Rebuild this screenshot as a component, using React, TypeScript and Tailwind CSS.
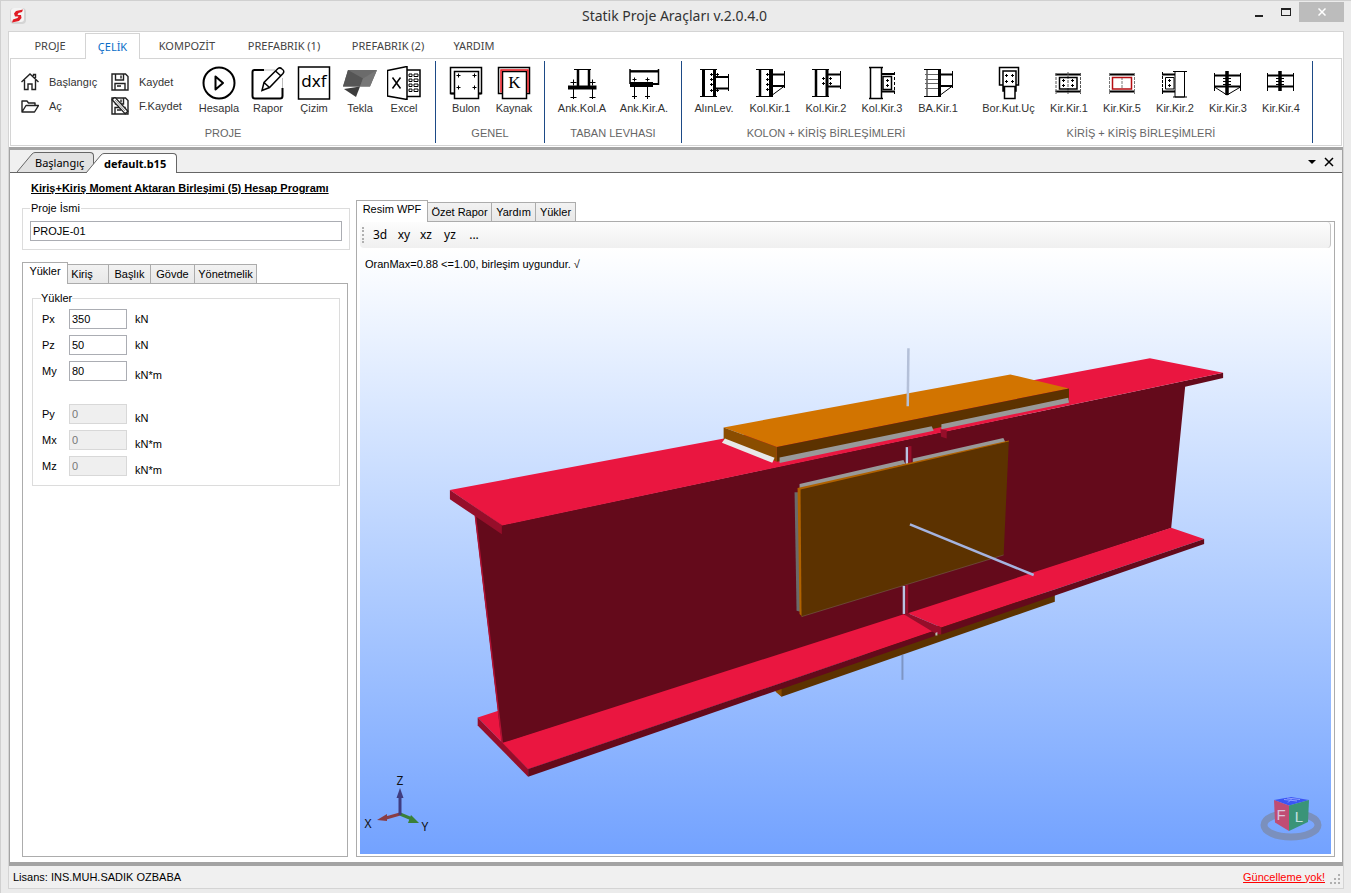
import { useState } from 'react';
import type { ReactNode } from 'react';
import clsx from 'clsx';

const menuTabs = [
  { name: 'PROJE', width: 'w-[70px]' },
  { name: 'ÇELİK', width: 'w-[55px]' },
  { name: 'KOMPOZİT', width: 'w-[94px]' },
  { name: 'PREFABRIK (1)', width: 'w-[100px]' },
  { name: 'PREFABRIK (2)', width: 'w-[108px]' },
  { name: 'YARDIM', width: 'w-[64px]' },
];

const loads = [
  { name: 'Px', value: '350', unit: 'kN', disabled: false },
  { name: 'Pz', value: '50', unit: 'kN', disabled: false },
  { name: 'My', value: '80', unit: 'kN*m', disabled: false },
];

const passiveLoads = [
  { name: 'Py', value: '0', unit: 'kN', disabled: true },
  { name: 'Mx', value: '0', unit: 'kN*m', disabled: true },
  { name: 'Mz', value: '0', unit: 'kN*m', disabled: true },
];

const Icon = ({ children }: { children: ReactNode }) => (
  <svg viewBox="0 0 34 34" className="h-[34px] w-[34px] shrink-0" fill="none" stroke="#000" strokeWidth="1" aria-hidden="true">
    {children}
  </svg>
);

// small bolt marks, drawn as crosses
const Bolts = ({ points, r = 2 }: { points: number[][]; r?: number }) => (
  <path d={points.map(([x, y]) => `M${x - r} ${y}h${r * 2}M${x} ${y - r}v${r * 2}`).join('')} />
);

const PlayIcon = () => (
  <Icon>
    <circle cx="17" cy="17" r="15.5" strokeWidth="2" />
    <path d="M13.5 10.5v13l7.5-6.500z" strokeWidth="2" strokeLinejoin="round" />
  </Icon>
);

const ReportIcon = () => (
  <Icon>
    <path d="M13 4H3.500Q1.500 4 1.500 6V30Q1.500 32.500 4 32.500H29Q31.500 32.500 31.500 30V22" strokeWidth="2" />
    <path d="M13 4H24M31.500 12V22" stroke="#bbb" />
    <path d="M11 24.500L13 16.500L27 2.500Q29 1 31 3Q34 5 32 7.500L18.500 21.500ZM13 16.500L18.500 21.500M24.500 5L30 10" strokeWidth="1.500" />
  </Icon>
);

const DxfIcon = () => (
  <Icon>
    <rect x="1.500" y="1" width="31" height="32" strokeWidth="1.500" />
    <text x="17" y="21" textAnchor="middle" fontSize="17" fontFamily="Noto Sans, sans-serif" fill="#000" stroke="none">dxf</text>
  </Icon>
);

const TeklaIcon = () => (
  <Icon>
    <g stroke="none">
      <path d="M5 4H34L27 20.500H0Z" fill="#6b6b6b" />
      <path d="M5 4L20 12.500L17 20.500H0Z" fill="#555" />
      <path d="M20 12.500L34 4L27 20.500H17Z" fill="#777" />
      <path d="M1 23L17 20.500L13 31Z" fill="#3c3c3c" />
    </g>
  </Icon>
);

const ExcelIcon = () => (
  <Icon>
    <path d="M0.500 4.500L20 0.500V33.500L0.500 30ZM20 4H33V30.500H20M5.500 11.500L13.500 22.500M13.500 11.500L5.500 22.500" strokeWidth="1.500" />
    <path d="M22 8H25V10.500H22ZM27 8H31V10.500H27ZM22 13H25V15.500H22ZM27 13H31V15.500H27ZM22 18H25V20.500H22ZM27 18H31V20.500H27ZM22 23H25V25.500H22ZM27 23H31V25.500H27Z" />
  </Icon>
);

const BoltPlateIcon = () => (
  <Icon>
    <path d="M5 27.500H1.500V1.500H32.500V27.500H29.500M5.500 5.500H29.500V32.500H5.500Z" strokeWidth="1.500" />
    <path d="M1.500 27.500H5.500M29.500 27.500H32.500" strokeWidth="2" />
    <Bolts points={[[9.5, 9.5], [25.5, 9.5], [9.5, 21.5], [25.5, 21.5]]} />
  </Icon>
);

const WeldPlateIcon = () => (
  <Icon>
    <path d="M5 27.500H1.500V1.500H32.500V27.500H29.500M5.500 5.500H29.500V32.500H5.500Z" strokeWidth="1.500" />
    <path d="M4 26.500V4H31V26.500" stroke="#e8141c" strokeWidth="1.500" />
    <text x="17.500" y="22" textAnchor="middle" fontSize="17" fontFamily="Liberation Serif, serif" fill="#000" stroke="none">K</text>
  </Icon>
);

const ColumnBaseIcon = () => (
  <Icon>
    <path d="M9 3.500H26M8.500 21V33M27.500 21V33M5.500 31.500H11.500M24.500 31.500H30.500" />
    <path d="M13 3.500V20M24 3.500V20" strokeWidth="2.500" />
    <path d="M3 21.500H31.500" strokeWidth="4" />
    <Bolts points={[[8.5, 16.5], [27.5, 16.5]]} r={3} />
  </Icon>
);

const BeamBaseIcon = () => (
  <Icon>
    <path d="M3 5H31.500M3 3V18M31.500 3V19" strokeWidth="1.500" />
    <path d="M3 5.500H31.500M25 18H31.500" strokeWidth="2" />
    <path d="M3 18.500H26" strokeWidth="5" />
    <path d="M7.500 21V33M20.500 21V33M5 30.500H10M18 30.500H23" />
    <Bolts points={[[7.5, 13.5], [20.5, 13.5]]} />
  </Icon>
);

const EndPlateIcon = () => (
  <Icon>
    <path d="M3 3.500H20M3 30.500H20M31.500 8V25" />
    <path d="M6.500 3.500V30.500" strokeWidth="3" />
    <path d="M17.500 3.500V30.500" strokeWidth="3" />
    <path d="M18 11H31.500M18 22.500H31.500" strokeWidth="2" />
    <Bolts r={1.5} points={[[14.5, 8.5], [14.5, 13.5], [14.5, 18.5], [14.5, 24.5], [20.5, 8.5], [20.5, 24.5]]} />
  </Icon>
);

const HaunchIcon = () => (
  <Icon>
    <path d="M3 3.500H20M3 30.500H20M31.500 5V22M20 28.500L31.500 20" />
    <path d="M7 3.500V30.500" strokeWidth="2.500" />
    <path d="M18 3.500V30.500" strokeWidth="4" />
    <path d="M18 8.500H31.500M18 20H31.500" strokeWidth="2" />
    <Bolts r={1.5} points={[[14.5, 8.5], [14.5, 13.5], [14.5, 18.5], [14.5, 23.5]]} />
  </Icon>
);

const FlushPlateIcon = () => (
  <Icon>
    <path d="M3 3.500H20M3 30.500H20M31.500 5V23" />
    <path d="M7 3.500V30.500" strokeWidth="2.500" />
    <path d="M18 3.500V30.500" strokeWidth="3" />
    <path d="M18 8.500H31.500M18 20.500H31.500" strokeWidth="2" />
    <Bolts r={1.5} points={[[14.5, 12.5], [14.5, 17.5], [21.5, 12.5], [21.5, 17.5]]} />
  </Icon>
);

const ShearPlateIcon = () => (
  <Icon>
    <path d="M5.500 1.500H16.500V32.500H5.500ZM4 1.500H18M4 32.500H18" strokeWidth="1.500" />
    <path d="M18 10.500H26.500V23.500H18Z" strokeWidth="1.500" />
    <path d="M17 8H30M17 25.500H30" strokeWidth="2" />
    <path d="M29.500 6V28" strokeDasharray="3 2" />
    <Bolts r={1.5} points={[[22.5, 14.5], [22.5, 19.5]]} />
  </Icon>
);

const ConcreteIcon = () => (
  <Icon>
    <path d="M3 3.500H20M3 30.500H20M6 3.500V30.500M31.500 5V22M20 28.500L31.500 20" />
    <path d="M4 8.500H18M4 13.500H18M4 17.500H18M4 22.500H18" stroke="#666" />
    <path d="M18.500 3.500V30.500" strokeWidth="3" />
    <path d="M18 8.500H31.500M18 20H31.500" strokeWidth="2" />
  </Icon>
);

const PipeIcon = () => (
  <Icon>
    <path d="M11 19H7.500V1.500H26.500V19H24" strokeWidth="1.500" />
    <path d="M11 5H24V20.500H11ZM12.500 20.500H23V32.500H12.500ZM11 20.500V25H12.500M24 20.500V25H23" strokeWidth="1.500" />
    <Bolts r={1.5} points={[[14.5, 9.5], [20.5, 9.5], [14.5, 15.5], [20.5, 15.5]]} />
  </Icon>
);

const SplicePlateIcon = () => (
  <Icon>
    <path d="M3.500 8.500H29M3.500 25.500H29" strokeWidth="2" />
    <path d="M4 7V28M28.500 7V28M16 6V28" strokeDasharray="3 1" stroke="#555" />
    <path d="M7.500 11.500H25V23H7.500Z" strokeWidth="1.500" />
    <Bolts r={1.5} points={[[11.5, 14.5], [20.5, 14.5], [11.5, 19.5], [20.5, 19.5]]} />
  </Icon>
);

const SpliceWeldIcon = () => (
  <Icon>
    <path d="M4 8.500H30M4 25.500H30" strokeWidth="2" />
    <path d="M4.500 7V28M29.500 7V28M17 11V23" strokeDasharray="3 1" stroke="#777" />
    <path d="M7.500 11.500H26.500V23H7.500Z" stroke="#b50d12" strokeWidth="1.500" />
  </Icon>
);

const BeamToBeamIcon = () => (
  <Icon>
    <path d="M4 8.500H17M4 25.500H17" strokeWidth="2" />
    <path d="M4.500 6V28" strokeDasharray="3 1" />
    <path d="M17 5.500H26.500V31H17ZM15 5.500H29M15 31H29M7.500 11.500H16V23H7.500Z" />
    <Bolts r={1.5} points={[[11.5, 14.5], [11.5, 19.5]]} />
  </Icon>
);

const SpliceEndIcon = ({ haunch = false }: { haunch?: boolean }) => (
  <Icon>
    <path d="M3.500 7V25M29.500 7V25M12 12.500H20M12 15.500H20M12 18.500H20" />
    {haunch && <path d="M3.500 21L16 29L29.500 21" />}
    <path d="M3 9.500H30M3 20.500H30" strokeWidth="2" />
    <path d={haunch ? 'M16 5V29' : 'M16 5V25'} strokeWidth="3.500" />
  </Icon>
);

const SmallIcon = ({ children }: { children: ReactNode }) => (
  <svg viewBox="0 0 18 18" className="h-[18px] w-[18px] shrink-0" fill="none" stroke="#222" strokeWidth="1.400" aria-hidden="true">
    {children}
  </svg>
);

const HomeIcon = () => (
  <SmallIcon>
    <path d="M0.500 9L9 1L17.500 9M3.500 7V16.500H7V11H11V16.500H14.500V7M12.500 3V1.500H14.500V5" />
  </SmallIcon>
);

const FolderIcon = () => (
  <SmallIcon>
    <path d="M1 15V4H6L7.500 6H14V8.500M1 15L5 8.500H17.500L13.500 15Z" strokeLinejoin="round" />
  </SmallIcon>
);

const SaveIcon = ({ edit = false }: { edit?: boolean }) => (
  <SmallIcon>
    <path d="M1 1H14.500L17 3.500V17H1ZM4.500 1V7H12.500V1M10 2.500V5.500M4 17V10.500H14V17M6 13H10" />
    {edit && (
      <>
        <path d="M2 1L16 16" stroke="#222" strokeWidth="5" />
        <path d="M3 2L15 15" stroke="#fff" strokeWidth="2.500" />
        <path d="M4 3L14 14" strokeWidth="0.500" />
      </>
    )}
  </SmallIcon>
);

const RibbonButton = ({ label, width, children }: { label: string; width: string; children: ReactNode }) => (
  <button type="button" className={clsx('flex flex-col items-center text-[11px] leading-4 whitespace-nowrap text-[#333]', width)}>
    {children}
    <span>{label}</span>
  </button>
);

const SmallButton = ({ label, children }: { label: string; children: ReactNode }) => (
  <button type="button" className="flex h-6 items-center gap-[10px] text-[11px] text-[#333]">
    {children}
    <span>{label}</span>
  </button>
);

const RibbonGroup = ({ title, className, children }: { title: string; className: string; children: ReactNode }) => (
  <section className={clsx('flex h-[82px] shrink-0 flex-col justify-between pt-[5px]', className)}>
    <div className="flex justify-center">{children}</div>
    <h2 className="text-center text-[11px] leading-5 text-[#666]">{title}</h2>
  </section>
);

const DocTab = ({ title, active = false, className }: { title: string; active?: boolean; className?: string }) => (
  <div className={clsx('flex h-5', active ? 'z-10 -mb-px' : '', className)}>
    <svg viewBox="0 0 18 20" className="h-5 w-[18px]" aria-hidden="true">
      <path d="M0 20L15 2Q16.500 0.500 18 0.500V20Z" fill={active ? '#fff' : '#e2e2e2'} />
      <path d="M0 20L15 2Q16.500 0.500 18 0.500" fill="none" stroke="#666" />
    </svg>
    <button
      type="button"
      className={clsx(
        'rounded-tr-sm border-t border-r border-[#666] text-left font-[Noto_Sans,sans-serif] text-[11px] leading-4 whitespace-nowrap',
        active ? 'w-[73px] bg-white font-bold' : 'w-[59px] bg-[#e2e2e2]'
      )}
    >
      {title}
    </button>
  </div>
);

const PanelTab = ({ title, active, width, onClick }: { title: string; active: boolean; width: string; onClick: () => void }) => (
  <button
    type="button"
    role="tab"
    aria-selected={active}
    onClick={onClick}
    className={clsx(
      '-mr-px border border-[#acacac] whitespace-nowrap',
      width,
      active ? 'z-10 -mb-px h-[22px] border-b-0 bg-white pb-1' : 'h-[19px] border-b-0 bg-linear-to-b from-[#f2f2f2] to-[#e8e8e8]'
    )}
  >
    {title}
  </button>
);

const LoadRow = ({ load, lowUnit }: { load: (typeof loads)[number]; lowUnit: boolean }) => (
  <div className="flex h-5">
    <label htmlFor={load.name} className="w-[27px] leading-5">{load.name}</label>
    <input
      id={load.name}
      defaultValue={load.value}
      disabled={load.disabled}
      className={clsx(
        'h-5 w-[58px] border px-[2px] text-[11px]',
        load.disabled ? 'border-[#d8d8d8] bg-[#efefef] text-[#777]' : 'border-[#abadb3] bg-white text-black'
      )}
    />
    <span className={clsx('pl-2 leading-5', lowUnit && 'pt-1')}>{load.unit}</span>
  </div>
);

const LoadPanel = () => {
  const [tab, setTab] = useState('Yükler');
  const tabs = [
    { name: 'Yükler', width: 'w-[46px]' },
    { name: 'Kiriş', width: 'w-[42px] pr-3' },
    { name: 'Başlık', width: 'w-[43px]' },
    { name: 'Gövde', width: 'w-[45px]' },
    { name: 'Yönetmelik', width: 'w-[63px]' },
  ];

  return (
    <div className="flex w-[328px] shrink-0 flex-col">
      <h1 className="mt-[7px] pl-[9px] text-[11px] leading-4 font-bold whitespace-nowrap underline">
        Kiriş+Kiriş Moment Aktaran Birleşimi (5) Hesap Programı
      </h1>
      <fieldset className="mt-[2px] border border-[#dcdcdc] px-[7px] pt-[3px] pb-2">
        <legend className="px-px leading-5">
          <label htmlFor="projectName">Proje İsmi</label>
        </legend>
        <input
          id="projectName"
          defaultValue="PROJE-01"
          className="block h-5 w-full border border-[#abadb3] bg-white px-[2px] text-[11px]"
        />
      </fieldset>
      <div role="tablist" className="mt-3 flex h-[21px] items-end">
        {tabs.map((t) => (
          <PanelTab key={t.name} title={t.name} width={t.width} active={tab === t.name} onClick={() => setTab(t.name)} />
        ))}
      </div>
      <div className="mr-[2px] flex-1 border border-[#acacac] pt-1 pr-[7px] pl-[9px]">
        <fieldset className="border border-[#dcdcdc] px-[9px] pt-px pb-[9px]">
          <legend className="-ml-px leading-5">Yükler</legend>
          <div className="flex flex-col gap-[6px]">
            {loads.map((load) => (
              <LoadRow key={load.name} load={load} lowUnit={load.name === 'My'} />
            ))}
          </div>
          <div className="mt-[23px] flex flex-col gap-[6px]">
            {passiveLoads.map((load) => (
              <LoadRow key={load.name} load={load} lowUnit />
            ))}
          </div>
        </fieldset>
      </div>
    </div>
  );
};

const BeamModel = () => (
  <svg viewBox="360 248 972 606" preserveAspectRatio="xMinYMid meet" className="absolute inset-0 h-full w-full" role="img" aria-label="3d model">
    {/* lower flange plate */}
    <path d="M776 690L940 625L1055.500 590V601.700L782 697Z" fill="#5c3200" />
    <path d="M776 690L782 688V697L776 692Z" fill="#8a4d00" />
    <path d="M903 655V680" stroke="#7d95c4" strokeWidth="2" />
    {/* lower flange, left part */}
    <path d="M477.800 717.700L500 710.500L502 743.300L904.300 614.300L935.400 630.700L528.300 769.300Z" fill="#ea1640" />
    {/* web */}
    <path d="M502 525L1224 372.500V377.700L1186 386.700L1172 528L904 616L502 744L475 516Z" fill="#640a1b" />
    <path d="M475.500 516L502.500 744" stroke="#b01234" strokeWidth="1.500" />
    {/* upper flange */}
    <path d="M450 490L1150.700 358L1224 372.500L502 525.500Z" fill="#ea1640" />
    <path d="M450 490L502 525V534.300L475 516L450 499.300Z" fill="#960e2a" />
    {/* lower flange edges and right part */}
    <path d="M502 743.300L904.300 614.300L935.400 630.700L528.300 769.300Z" fill="#ea1640" />
    <path d="M477.800 717.700L528.300 769.300V777L477.800 725.700Z" fill="#960e2a" />
    <path d="M528.300 769.300L935.400 630.700V636L528.300 777Z" fill="#640a1b" />
    <path d="M908.400 613.300L1172 527.700L1205 539L942 627.700Z" fill="#ea1640" />
    <path d="M904.300 614.300L908.400 613.300L942 627.700V634.700L937 634Z" fill="#960e2a" />
    <path d="M942 627.700L1205 539V544L942 634.700Z" fill="#640a1b" />
    <path d="M936 633L938 632V635.500H936Z" fill="#bbb" />
    {/* upper flange plate */}
    <path d="M724 427.300L1011 374.300L1069.700 388.300L777.300 447Z" fill="#d27400" />
    <path d="M777.300 447L1069.700 388.300V400L934 428.500L777.300 461.700Z" fill="#5c3200" />
    <path d="M724 427.300L777.300 447V461.700L724 440Z" fill="#8a4d00" />
    <path d="M725.300 438.300L775 457.700L772.700 462.700L722.300 442.700Z" fill="#e8e8e8" />
    <path d="M780 457.300L932.300 426L934.300 430.700L780 463Z" fill="#999" />
    <path d="M942 424L1069 397.700L1069.700 402.700L942 429Z" fill="#999" />
    <path d="M941 429L947.300 430V438.300L941.700 436.700Z" fill="#960e2a" />
    <path d="M909 348L908.300 406" stroke="#b4c0d8" strokeWidth="2.500" />
    {/* web plate */}
    <path d="M907.500 447V464" stroke="#b9c4e2" strokeWidth="2.500" />
    <path d="M910.500 446V464" stroke="#960e2a" strokeWidth="3" />
    <path d="M800 484L904 460L906 464L800 489.500Z" fill="#999" />
    <path d="M913.300 458.300L1004 438L1006 442L913.300 463Z" fill="#999" />
    <path d="M795 492.300H800L802 612L797 610.700Z" fill="#6a6a6a" />
    <path d="M798 488L1009.500 440.500V442L802 492L803 617L800 614Z" fill="#b06200" />
    <path d="M801 489.500L1009.500 441.500L1004.300 555L802 616.700Z" fill="#5c3200" />
    <path d="M802 616.700L1004.300 555" stroke="#7a6a60" strokeWidth="0.500" />
    <path d="M904.500 586V614" stroke="#b9c4e2" strokeWidth="2.500" />
    <path d="M907.500 585V613.500" stroke="#960e2a" strokeWidth="2.500" />
    <path d="M910.500 524.300L1034.400 575" stroke="#a5b4e0" strokeWidth="2.500" />
  </svg>
);

const AxisTriad = () => (
  <svg viewBox="0 0 70 70" className="absolute bottom-[14px] left-[2px] h-[70px] w-[70px]" fontFamily="Noto Sans, sans-serif" fontSize="12" aria-hidden="true">
    <path d="M38 44L24 48" stroke="#8a3d44" strokeWidth="3" />
    <path d="M15 50L25 44V51Z" fill="#8a3d44" />
    <path d="M38 44L50 49" stroke="#3b8038" strokeWidth="3" />
    <path d="M57 53L46 53L49 45Z" fill="#3b8038" />
    <path d="M38 45V26" stroke="#403c80" strokeWidth="3" />
    <path d="M38 18L41.500 28H34.500Z" fill="#403c80" />
    <text x="38" y="15" textAnchor="middle" fill="#111">Z</text>
    <text x="6" y="58" textAnchor="middle" fill="#111">X</text>
    <text x="63" y="61" textAnchor="middle" fill="#111">Y</text>
  </svg>
);

const ViewCube = () => (
  <svg viewBox="0 0 64 50" className="absolute right-[8px] bottom-[8px] h-[50px] w-[64px]" fontFamily="Liberation Sans, sans-serif" aria-hidden="true">
    <ellipse cx="32" cy="29" rx="27" ry="12" fill="none" stroke="#7b90bd" strokeWidth="7" />
    <path d="M15 4L32 1L50 4L30 9.500Z" fill="#3b55f5" />
    <path d="M15 4L30 9.500V35L16 26.500Z" fill="#c04c74" />
    <path d="M30 9.500L50 4L49 26L30 35Z" fill="#3a9478" />
    <path d="M25 3.500L38 5M28 2L41 3.500M29 6.500L33 2.500" stroke="#8ea0ff" strokeWidth="1" />
    <text x="22" y="24" textAnchor="middle" fontSize="15" fill="#d9c3dc">F</text>
    <text x="40" y="26" textAnchor="middle" fontSize="15" fill="#c8e2e2">L</text>
  </svg>
);

const ModelView = () => {
  const [tab, setTab] = useState('Resim WPF');
  const tabs = [
    { name: 'Resim WPF', width: 'w-[72px]' },
    { name: 'Özet Rapor', width: 'w-[65px]' },
    { name: 'Yardım', width: 'w-[45px]' },
    { name: 'Yükler', width: 'w-[41px]' },
  ];

  return (
    <div className="flex min-w-0 flex-1 flex-col pt-[27px]">
      <div role="tablist" className="flex h-[21px] items-end">
        {tabs.map((t) => (
          <PanelTab key={t.name} title={t.name} width={t.width} active={tab === t.name} onClick={() => setTab(t.name)} />
        ))}
      </div>
      <div className="flex flex-1 flex-col border border-[#acacac] px-[3px] pb-[2px]">
        <div className="flex h-[26px] items-center rounded-sm border-r border-[#c4c4c4] bg-linear-to-b from-[#fdfdfd] to-[#f0f0f0] font-[Noto_Sans,sans-serif] text-xs">
          <span className="ml-[2px] h-4 border-l-2 border-dotted border-[#b0b0b0]" />
          <button type="button" className="ml-[2px] w-7">3d</button>
          <button type="button" className="w-5">xy</button>
          <button type="button" className="w-6">xz</button>
          <button type="button" className="w-6">yz</button>
          <button type="button" className="w-6">...</button>
        </div>
        <div className="relative min-h-[400px] flex-1 bg-linear-to-b from-white to-[#73a2ff]">
          <BeamModel />
          <p className="absolute top-2 left-[5px] leading-4">OranMax=0.88 &lt;=1.00, birleşim uygundur. √</p>
          <AxisTriad />
          <ViewCube />
        </div>
      </div>
    </div>
  );
};

const TitleBar = () => (
  <header className="flex h-[29px] shrink-0 items-start">
    <svg viewBox="0 0 16 16" className="mt-[6px] ml-[9px] h-4 w-4" aria-hidden="true">
      <rect width="16" height="16" rx="4" fill="#d4d4d4" />
      <rect x="1" y="0" width="13" height="14" rx="3" fill="#f4f4f4" />
      <path d="M13 1.500L6 3L4 5.500L5 8.500H8.500L7.500 10L3 11.500L2 14.500L9 13L11.500 10L11 7H7.500L8.500 5L12 4Z" fill="#e01c24" />
    </svg>
    <span className="flex-1 pl-[78px] text-center font-[Noto_Sans,sans-serif] text-sm leading-7 text-[#333]">
      Statik Proje Araçları v.2.0.4.0
    </span>
    <div className="mr-[7px] flex">
      <button type="button" aria-label="Simge durumuna küçült" className="flex h-5 w-[27px] items-center justify-center pt-2">
        <span className="h-[2px] w-2 bg-[#222]" />
      </button>
      <button type="button" aria-label="Ekranı kapla" className="flex h-5 w-[27px] items-center justify-center">
        <span className="h-2 w-[10px] border border-t-2 border-[#222]" />
      </button>
      <button type="button" aria-label="Kapat" className="flex h-5 w-[45px] items-center justify-center bg-[#bcbcbc]">
        <svg viewBox="0 0 8 8" className="h-2 w-2" stroke="#fff" strokeWidth="1.500">
          <path d="M0.500 0.500L7.500 7.500M7.500 0.500L0.500 7.500" />
        </svg>
      </button>
    </div>
  </header>
);

const Ribbon = () => (
  <div className="shrink-0 bg-white px-px pb-px">
    <nav className="flex h-[26px] pl-[5px] font-[Noto_Sans,sans-serif] text-[11px] text-[#444]">
      {menuTabs.map((tab) => (
        <button
          key={tab.name}
          type="button"
          className={clsx(
            'pt-[2px] whitespace-nowrap',
            tab.width,
            tab.name === 'ÇELİK' && 'z-10 -mb-px mt-px border border-b-0 border-[#d4d4d4] bg-white text-[#0a6ec8]'
          )}
        >
          {tab.name}
        </button>
      ))}
    </nav>
    <div className="flex h-[88px] items-center overflow-hidden border border-[#d4d4d4]">
      <RibbonGroup title="PROJE" className="w-[425px] border-r border-[#1d4a86]">
        <div className="flex w-[90px] flex-col pt-1">
          <SmallButton label="Başlangıç"><HomeIcon /></SmallButton>
          <SmallButton label="Aç"><FolderIcon /></SmallButton>
        </div>
        <div className="flex w-[82px] flex-col pt-1">
          <SmallButton label="Kaydet"><SaveIcon /></SmallButton>
          <SmallButton label="F.Kaydet"><SaveIcon edit /></SmallButton>
        </div>
        <RibbonButton label="Hesapla" width="w-[52px]"><PlayIcon /></RibbonButton>
        <RibbonButton label="Rapor" width="w-[46px]"><ReportIcon /></RibbonButton>
        <RibbonButton label="Çizim" width="w-[46px]"><DxfIcon /></RibbonButton>
        <RibbonButton label="Tekla" width="w-[46px]"><TeklaIcon /></RibbonButton>
        <RibbonButton label="Excel" width="w-[42px]"><ExcelIcon /></RibbonButton>
      </RibbonGroup>
      <RibbonGroup title="GENEL" className="w-[109px] border-r border-[#1d4a86]">
        <RibbonButton label="Bulon" width="w-12"><BoltPlateIcon /></RibbonButton>
        <RibbonButton label="Kaynak" width="w-12"><WeldPlateIcon /></RibbonButton>
      </RibbonGroup>
      <RibbonGroup title="TABAN LEVHASI" className="w-[137px] border-r border-[#1d4a86]">
        <RibbonButton label="Ank.Kol.A" width="w-[62px]"><ColumnBaseIcon /></RibbonButton>
        <RibbonButton label="Ank.Kir.A." width="w-[62px]"><BeamBaseIcon /></RibbonButton>
      </RibbonGroup>
      <RibbonGroup title="KOLON + KİRİŞ BİRLEŞİMLERİ" className="w-[288px]">
        <RibbonButton label="AlınLev." width="w-14"><EndPlateIcon /></RibbonButton>
        <RibbonButton label="Kol.Kir.1" width="w-14"><HaunchIcon /></RibbonButton>
        <RibbonButton label="Kol.Kir.2" width="w-14"><FlushPlateIcon /></RibbonButton>
        <RibbonButton label="Kol.Kir.3" width="w-14"><ShearPlateIcon /></RibbonButton>
        <RibbonButton label="BA.Kir.1" width="w-14"><ConcreteIcon /></RibbonButton>
      </RibbonGroup>
      <RibbonGroup title="KİRİŞ + KİRİŞ BİRLEŞİMLERİ" className="w-[343px] border-r border-[#1d4a86]">
        <RibbonButton label="Bor.Kut.Uç" width="w-[68px]"><PipeIcon /></RibbonButton>
        <RibbonButton label="Kir.Kir.1" width="w-[53px]"><SplicePlateIcon /></RibbonButton>
        <RibbonButton label="Kir.Kir.5" width="w-[53px]"><SpliceWeldIcon /></RibbonButton>
        <RibbonButton label="Kir.Kir.2" width="w-[53px]"><BeamToBeamIcon /></RibbonButton>
        <RibbonButton label="Kir.Kir.3" width="w-[53px]"><SpliceEndIcon haunch /></RibbonButton>
        <RibbonButton label="Kir.Kir.4" width="w-[53px]"><SpliceEndIcon /></RibbonButton>
      </RibbonGroup>
    </div>
  </div>
);

const App = () => {
  return (
    <div className="flex min-h-screen flex-col border-t border-l border-[#d0d0d0] bg-[#ebebeb] pt-px pb-1 font-[Liberation_Sans,Arial,sans-serif] text-[11px] text-black">
      <TitleBar />
      <div className="mr-[7px] ml-[7px] flex flex-1 flex-col border border-[#d4d4d4]">
        <Ribbon />
        <main className="flex flex-1 flex-col border-x border-t-3 border-b-4 border-[#a3a3a3] bg-white">
          <div className="flex h-[23px] shrink-0 items-end border-b border-[#666] bg-[#f0f0f0] pl-[7px]">
            <DocTab title="Başlangıç" />
            <DocTab title="default.b15" active className="-ml-2" />
            <div className="ml-auto flex items-center gap-2 pr-2 pb-[5px]">
              <button type="button" aria-label="Sekmeler" className="border-x-4 border-t-4 border-x-transparent border-t-black" />
              <button type="button" aria-label="Sekmeyi kapat">
                <svg viewBox="0 0 10 10" className="h-[10px] w-[10px]" stroke="#000" strokeWidth="1.500">
                  <path d="M1 1L9 9M9 1L1 9" />
                </svg>
              </button>
            </div>
          </div>
          <div className="flex flex-1 gap-[6px] pr-[7px] pb-[5px] pl-3">
            <LoadPanel />
            <ModelView />
          </div>
        </main>
        <footer className="flex h-[22px] shrink-0 items-center bg-[#f0f0f0] pl-1">
          <span>Lisans: INS.MUH.SADIK OZBABA</span>
          <a href="#guncelleme" className="ml-auto text-[#ff0000] underline">Güncelleme yok!</a>
          <svg viewBox="0 0 12 12" className="mt-1 mr-[2px] ml-1 h-3 w-3" fill="#b0b0b0" aria-hidden="true">
            <path d="M9 1h2v2H9zM5 5h2v2H5zM9 5h2v2H9zM1 9h2v2H1zM5 9h2v2H5zM9 9h2v2H9z" />
          </svg>
        </footer>
      </div>
    </div>
  );
};

export default App;
